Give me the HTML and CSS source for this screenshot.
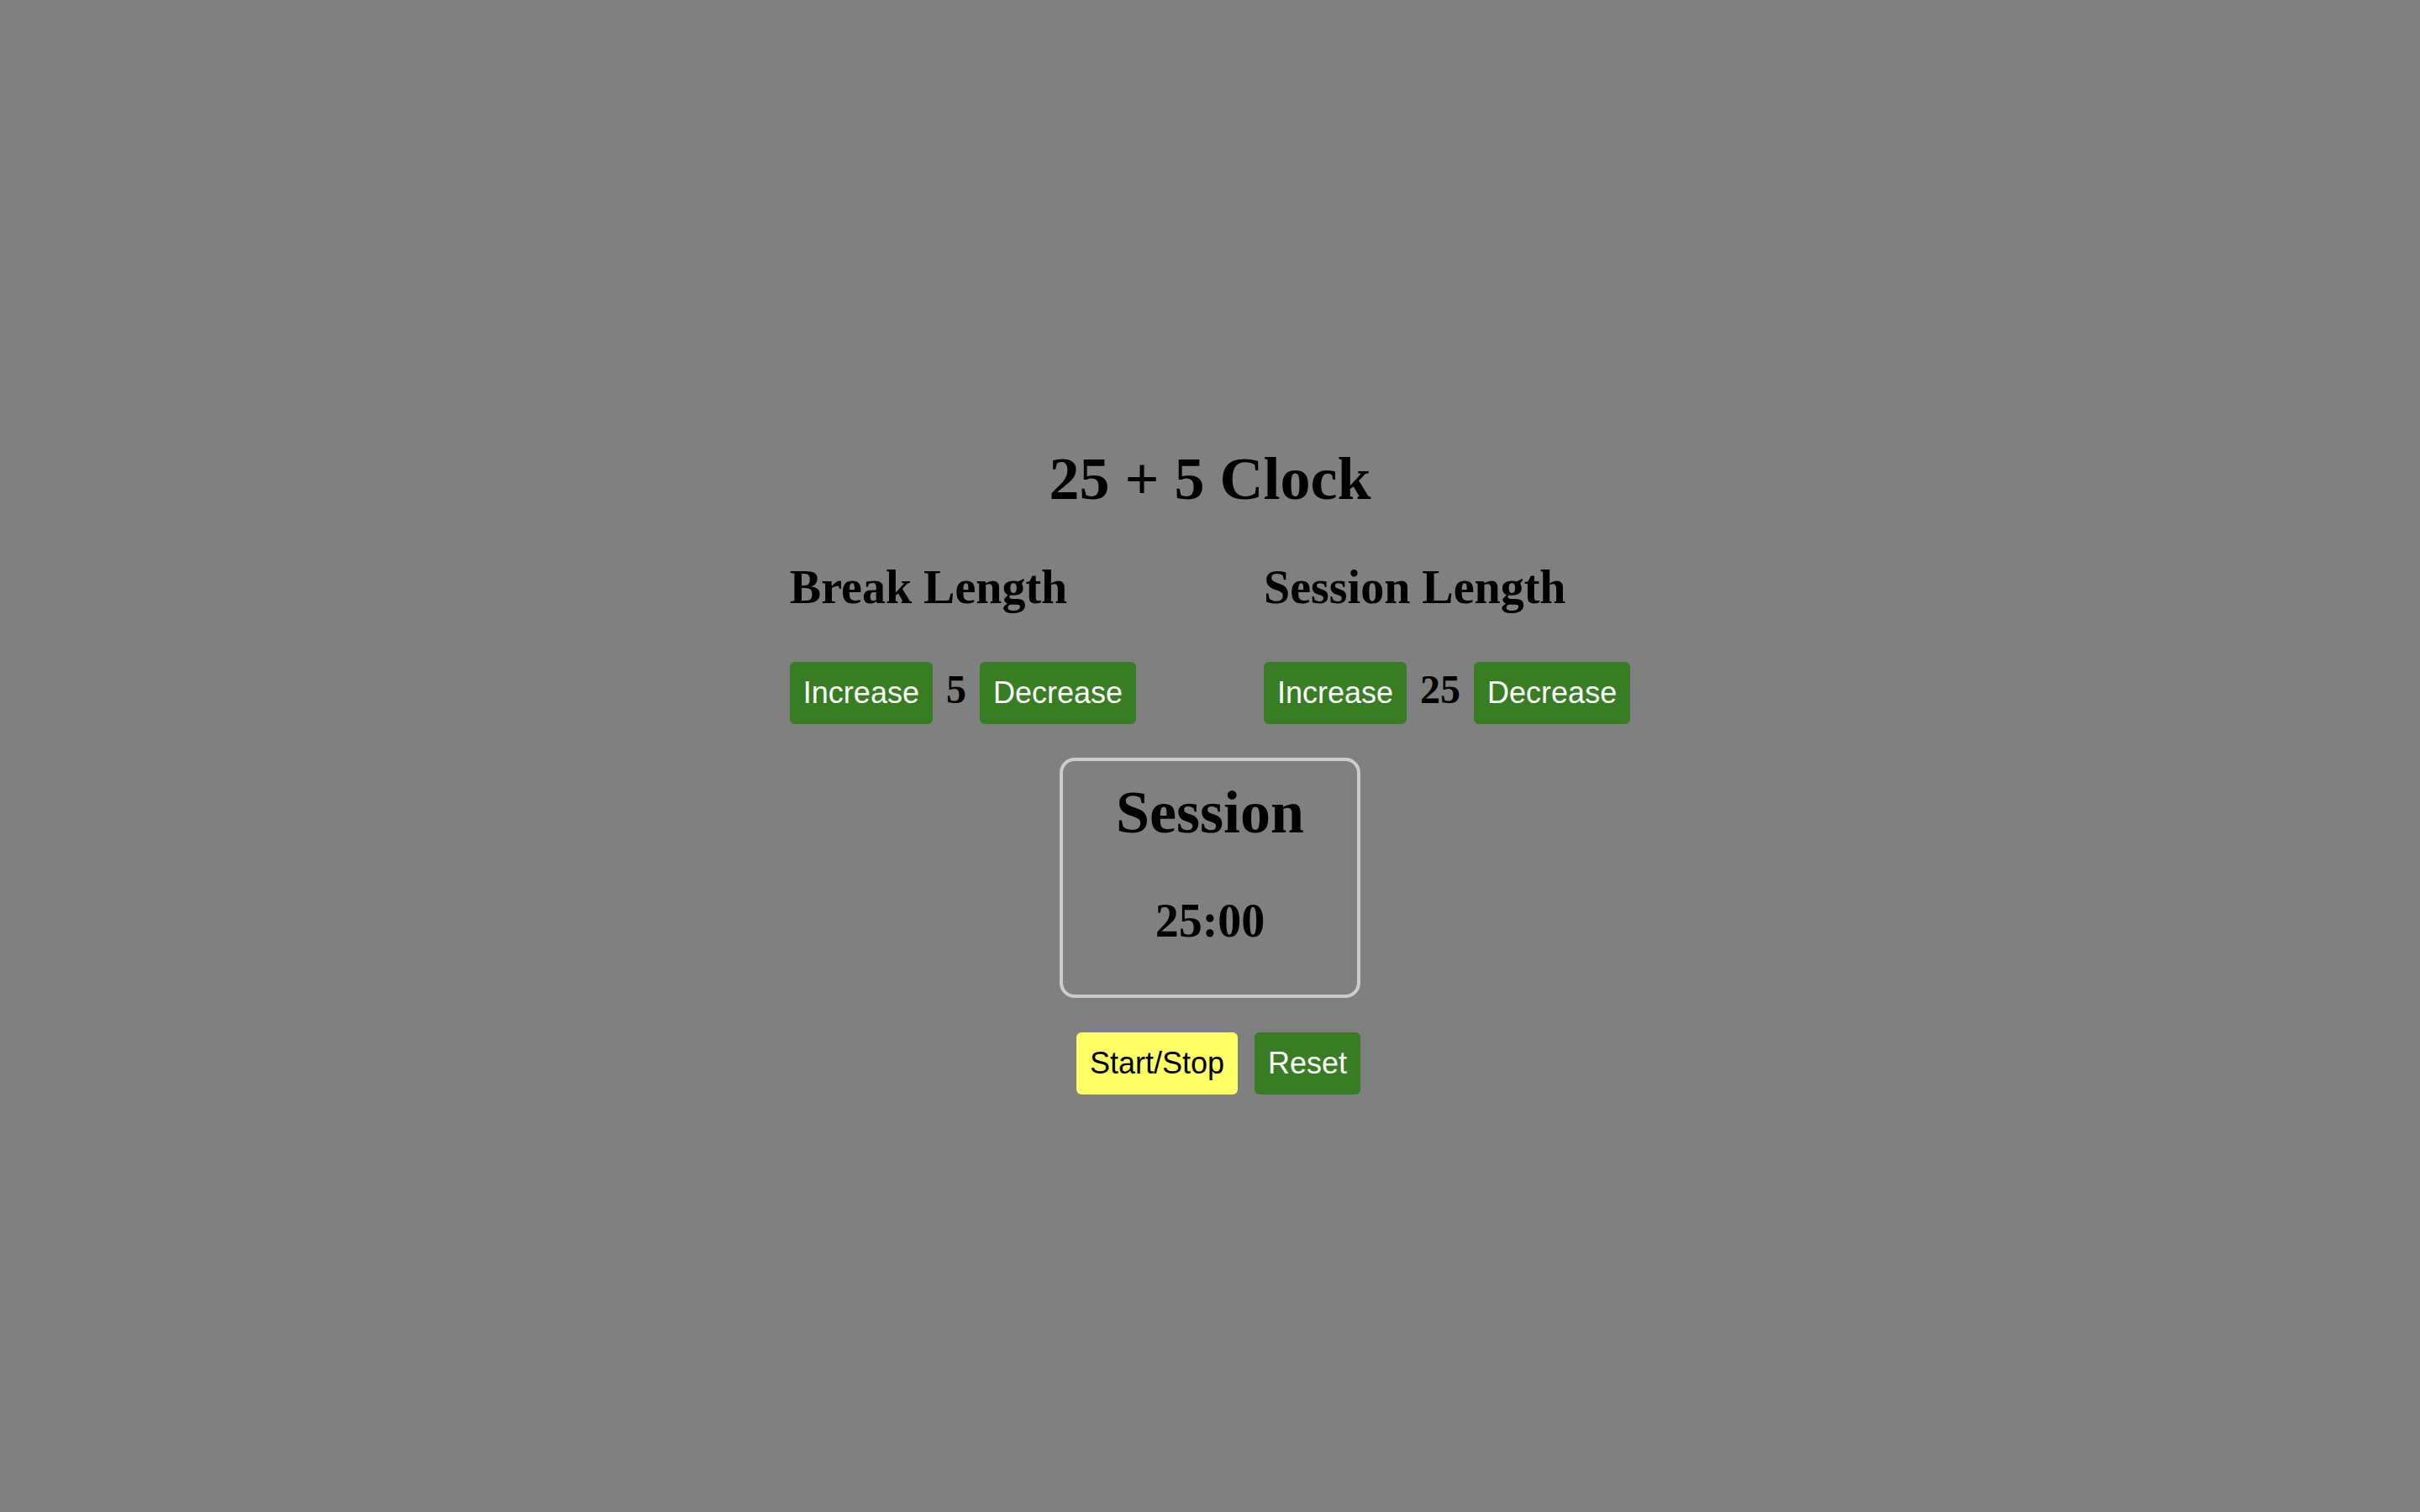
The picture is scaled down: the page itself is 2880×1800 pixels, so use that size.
FILE: index.html
```html
<!DOCTYPE html>
<html lang="en">
<head>
<meta charset="utf-8">
<title>25 + 5 Clock</title>
<link rel="stylesheet" href="styles.css">
</head>
<body>
<main class="app">
  <h1 class="title">25 + 5 Clock</h1>
  <div class="lengths">
    <section class="length">
      <h2 class="length-label">Break Length</h2>
      <div class="length-controls">
        <button class="btn btn-green">Increase</button>
        <span class="length-value">5</span>
        <button class="btn btn-green">Decrease</button>
      </div>
    </section>
    <section class="length">
      <h2 class="length-label">Session Length</h2>
      <div class="length-controls">
        <button class="btn btn-green">Increase</button>
        <span class="length-value">25</span>
        <button class="btn btn-green">Decrease</button>
      </div>
    </section>
  </div>
  <div class="timer">
    <div class="timer-label">Session</div>
    <div class="timer-left">25:00</div>
  </div>
  <div class="controls">
    <button class="btn btn-yellow">Start/Stop</button>
    <button class="btn btn-green">Reset</button>
  </div>
</main>
</body>
</html>
```

FILE: styles.css
```css
html, body {
  margin: 0;
  padding: 0;
}

body {
  background: #808080;
  min-height: 100vh;
  font-family: "Liberation Serif", "Times New Roman", serif;
  color: #000;
}

.app {
  display: flex;
  flex-direction: column;
  align-items: center;
  padding-top: 530px;
}

.title {
  margin: 0;
  font-size: 72px;
  line-height: 80px;
  font-weight: bold;
  letter-spacing: 0;
}

.lengths {
  display: flex;
  gap: 152px;
  margin-top: 58px;
}

.length {
  display: flex;
  flex-direction: column;
  align-items: flex-start;
}

.length-label {
  margin: 0;
  font-size: 56px;
  line-height: 62px;
  font-weight: bold;
}

.length-controls {
  display: flex;
  align-items: baseline;
  gap: 16px;
  margin-top: 58px;
}

.length-value {
  font-size: 48px;
  line-height: 53px;
  font-weight: bold;
}

.btn {
  font-family: "Liberation Sans", Arial, sans-serif;
  font-size: 36px;
  line-height: 42px;
  padding: 16px;
  border: none;
  border-radius: 6px;
  margin: 0;
}

.btn-green {
  background: #387d23;
  color: #fff;
}

.btn-yellow {
  background: #ffff66;
  color: #000;
}

.timer {
  margin-top: 40px;
  width: 350px;
  padding: 21px 0 57px;
  border: 4px solid #cccccc;
  border-radius: 18px;
  display: flex;
  flex-direction: column;
  align-items: center;
  font-weight: bold;
}

.timer-label {
  font-size: 72px;
  line-height: 80px;
}

.timer-left {
  margin-top: 58px;
  font-size: 56px;
  line-height: 62px;
}

.controls {
  display: flex;
  gap: 20px;
  padding-left: 20px;
  margin-top: 41px;
}
```
